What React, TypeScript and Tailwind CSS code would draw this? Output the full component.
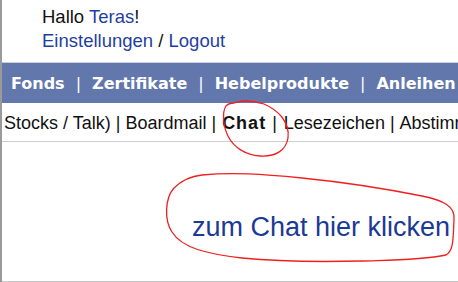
import React from 'react';

const navItems = ['Fonds', 'Zertifikate', 'Hebelprodukte', 'Anleihen'];
const subItems = ['Stocks / Talk)', 'Boardmail', 'Chat', 'Lesezeichen', 'Abstimmungen'];

export default function App() {
  return (
    <div className="relative w-[458px] h-[282px] overflow-hidden bg-white border-l-2 border-[#9a9a9a] font-['Liberation_Sans',Arial,sans-serif]">
      {/* Greeting */}
      <div className="h-[62px] pl-[40px] pt-[5px] text-[18.5px] leading-[24px] text-[#111]">
        <div>
          Hallo <span className="text-[#1f3f9f]">Teras</span>!
        </div>
        <div>
          <span className="text-[#1f3f9f]">Einstellungen</span> / <span className="text-[#1f3f9f]">Logout</span>
        </div>
      </div>

      {/* Main navigation */}
      <div className="h-[41px] border-t border-[#c8cfe0] bg-[#6278ad] flex items-center pl-[9px] pt-[1px] whitespace-nowrap font-['DejaVu_Sans',Verdana,sans-serif] font-bold text-[16px] text-white">
        {navItems.map((item, i) => (
          <span key={item} className="flex items-center">
            {i > 0 && <span className="px-[11px] font-normal">|</span>}
            {item}
          </span>
        ))}
      </div>

      {/* Sub navigation */}
      <div className="h-[39px] border-b border-[#cfcfcf] flex items-center pl-[2px] pt-[3px] whitespace-nowrap overflow-hidden text-[18px] text-[#111]">
        {subItems.map((item, i) => (
          <span key={item} className="flex items-center">
            {i > 0 && <span className={i === 3 ? 'pl-[6px] pr-[7px]' : 'px-[5px]'}>|</span>}
            <span className={item === 'Chat' ? 'font-bold tracking-[1px] pl-[1px]' : ''}>{item}</span>
          </span>
        ))}
      </div>

      {/* Content */}
      <div className="h-[140px] border-b border-[#c8c8c8] flex items-start pl-[190px] pt-[69px]">
        <span className="text-[27px] leading-[32px] text-[#1b3a94] whitespace-nowrap">zum Chat hier klicken</span>
      </div>

      {/* Hand-drawn red marks */}
      <svg className="absolute left-0 top-0 pointer-events-none" width="458" height="282" viewBox="0 0 458 282" fill="none">
        <path
          d="M232 103 C240 100 252 101 262 104 C276 110 288 122 286 138 C284 150 274 157 258 156 C244 155 232 148 226 136 C221 126 220 112 224 106 C226 104 229 103 232 103 Z"
          stroke="#f02020"
          strokeWidth="1.3"
        />
        <path
          d="M200 175 C230 172 260 174 300 178 C340 182 380 188 420 196 C440 200 454 206 452 220 C451 238 452 250 444 255 C420 260 390 260 360 261 C320 262 280 262 240 258 C205 254 180 248 170 232 C162 220 163 198 172 188 C180 180 190 176 200 175 Z"
          stroke="#f02020"
          strokeWidth="1.3"
        />
      </svg>
    </div>
  );
}
